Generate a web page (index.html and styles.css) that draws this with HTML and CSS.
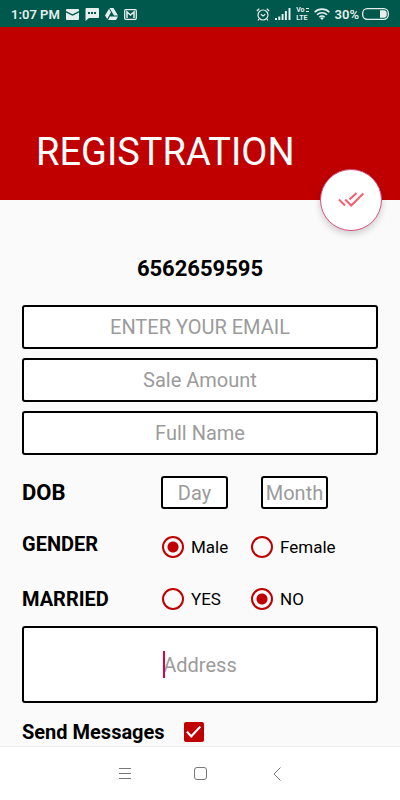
FILE: index.html
```html
<!DOCTYPE html>
<html lang="en">
<head>
<meta charset="utf-8">
<meta name="viewport" content="width=device-width, initial-scale=1">
<title>Registration</title>
<link rel="stylesheet" href="styles.css">
</head>
<body>
<div class="status">
  <div class="group left">
    <span class="time">1:07 PM</span>
    <svg width="13" height="11" viewBox="0 0 13 11"><path fill="currentColor" d="M1 0h11a1 1 0 0 1 1 1v1L6.500 5.200 0 2V1a1 1 0 0 1 1-1zM0 3.500l6.500 3.200L13 3.500V10a1 1 0 0 1-1 1H1a1 1 0 0 1-1-1z"/></svg>
    <svg width="14" height="13" viewBox="0 0 14 13"><path fill="currentColor" fill-rule="evenodd" d="M1 0h12a1 1 0 0 1 1 1v8a1 1 0 0 1-1 1H4l-3.500 3V1zM3 4v2h2V4zm3 0v2h2V4zm3 0v2h2V4z"/></svg>
    <svg width="13" height="12" viewBox="0 0 13 12"><path fill="currentColor" d="M4.500 0h4L13 7.500H9zM4 .8l2 3.400L2.200 11 0 7.500zM5 8.500h8L11 12H3z"/></svg>
    <svg width="13" height="11" viewBox="0 0 13 11"><rect x=".7" y=".7" width="11.600" height="9.600" rx="1" fill="none" stroke="currentColor" stroke-width="1.300"/><path d="M3 9V3l3.500 3L10 3v6" fill="none" stroke="currentColor" stroke-width="1.500"/></svg>
  </div>
  <div class="group">
    <svg width="14" height="13" viewBox="0 0 14 13" fill="none" stroke="currentColor" stroke-width="1.200"><circle cx="7" cy="7" r="5"/><path d="M4.800 6.300L7 8l2.300-1.700M.8 3L3.300.8M13.200 3L10.700.8M3 11l-1 1.500M11 11l1 1.500"/></svg>
    <svg width="16" height="12" viewBox="0 0 16 12"><path fill="currentColor" d="M0 10h2v2H0zM3.300 8.500h2V12h-2zM6.600 6h2v6h-2zM9.900 3h2v9h-2zM13.500 0h2v12h-2z"/></svg>
    <span class="volte"><span>Vo<i></i></span><span>LTE</span></span>
    <svg width="16" height="12" viewBox="0 0 16 12" fill="none" stroke="currentColor" stroke-width="1.600"><path d="M.6 4.200a10.500 10.500 0 0 1 14.800 0M3 6.800a7 7 0 0 1 10 0M5.400 9.200a3.700 3.700 0 0 1 5.200 0"/><path fill="currentColor" stroke="none" d="M6.300 10.200a2.400 2.400 0 0 1 3.400 0L8 12z"/></svg>
    <span class="battery">30%
      <svg width="27" height="12" viewBox="0 0 27 12"><rect x=".7" y=".7" width="25.600" height="10.600" rx="4.500" fill="none" stroke="currentColor" stroke-width="1.300"/><path fill="currentColor" d="M18 2.300h4a2.700 2.700 0 0 1 2.700 2.700v2a2.700 2.700 0 0 1-2.700 2.700h-4z"/></svg>
    </span>
  </div>
</div>
<header class="hero">
  <h1>REGISTRATION</h1>
  <button class="fab" type="button" aria-label="Submit">
    <svg width="26" height="16" viewBox="0 0 26 16" fill="none" stroke="#f55f70" stroke-width="2"><path d="M1 7.500l6 6M7.200 7.500l6 6L25.300 1.500M11.500 7.500L18.500 1"/></svg>
  </button>
</header>
<form class="form">
  <output class="phone">6562659595</output>
  <input class="box" type="email" placeholder="ENTER YOUR EMAIL" aria-label="Email">
  <input class="box" type="text" placeholder="Sale Amount" aria-label="Sale amount">
  <input class="box" type="text" placeholder="Full Name" aria-label="Full name">
  <div class="row dob">
    <span class="name large">DOB</span>
    <input class="box small" type="text" placeholder="Day" aria-label="Day">
    <input class="box small" type="text" placeholder="Month" aria-label="Month">
  </div>
  <div class="row gender" role="radiogroup" aria-label="Gender">
    <span class="name">GENDER</span>
    <label class="option"><input type="radio" name="gender" checked>Male</label>
    <label class="option"><input type="radio" name="gender">Female</label>
  </div>
  <div class="row married" role="radiogroup" aria-label="Married">
    <span class="name">MARRIED</span>
    <label class="option"><input type="radio" name="married">YES</label>
    <label class="option"><input type="radio" name="married" checked>NO</label>
  </div>
  <div class="address">
    <input class="box tall" type="text" placeholder="Address" aria-label="Address">
    <span class="caret"></span>
  </div>
  <div class="send">
    <label for="send">Send Messages</label>
    <input id="send" type="checkbox" checked>
  </div>
</form>
<nav class="keys">
  <button type="button" aria-label="Menu"><svg width="14" height="14" viewBox="0 0 14 14"><path d="M1 1.500h12M1 6.500h12M1 11.500h12"/></svg></button>
  <button type="button" aria-label="Home"><svg width="14" height="14" viewBox="0 0 14 14"><rect x=".5" y=".5" width="12" height="12" rx="2.500"/></svg></button>
  <button type="button" aria-label="Back"><svg width="14" height="14" viewBox="0 0 14 14"><path d="M10.500 .5L4 7l6.500 6.500"/></svg></button>
</nav>
</body>
</html>
```
FILE: styles.css
```css
* { box-sizing: border-box; }

body {
  margin: 0;
  min-height: 100vh;
  display: flex;
  flex-direction: column;
  background: #fafafa;
  color: #000;
  font-family: Roboto, "Liberation Sans", sans-serif;
}

.status {
  height: 27px;
  display: flex;
  align-items: center;
  justify-content: space-between;
  padding: 1px 11px 0 11px;
  background: #00574b;
  color: #e6efed;
  font-size: 13px;
  font-weight: 600;
}
.status svg { flex: none; }
.group {
  display: flex;
  align-items: center;
  gap: 5px;
}
.left { gap: 6px; }
.volte {
  display: flex;
  flex-direction: column;
  font-size: 7px;
  line-height: 8px;
  font-weight: 700;
}
.volte i {
  display: inline-block;
  width: 3px;
  height: 4px;
  margin-left: 1px;
  border: solid currentColor;
  border-width: 1px 0;
}
.battery {
  display: flex;
  align-items: center;
  gap: 3px;
}

.hero {
  position: relative;
  height: 173px;
  display: flex;
  align-items: flex-end;
  padding: 0 36px 25px;
  background: #c00000;
  color: #fff;
}
.hero h1 {
  margin: 0;
  font-size: 38px;
  line-height: 46px;
  font-weight: 400;
}
.fab {
  position: absolute;
  right: 18px;
  bottom: -31px;
  width: 62px;
  height: 62px;
  display: flex;
  align-items: center;
  justify-content: center;
  padding: 0;
  border: 1px solid #d9517c;
  border-radius: 50%;
  background: #fff;
  box-shadow: 0 3px 7px rgba(0, 0, 0, .18);
}

.form {
  flex: 1;
  display: flex;
  flex-direction: column;
  padding: 55px 22px 0;
}
.phone {
  margin-bottom: 22px;
  text-align: center;
  font-size: 22px;
  line-height: 28px;
  font-weight: 700;
}
.box {
  width: 100%;
  height: 44px;
  margin: 0 0 9px;
  padding: 0;
  border: 2px solid #000;
  border-radius: 3px;
  background: #fff;
  font: 400 20px/24px Roboto, "Liberation Sans", sans-serif;
  text-align: center;
  outline: none;
}
.box::placeholder { color: #9b9b9b; opacity: 1; }
.box.small { width: 67px; height: 33px; margin: 0; }
.box.tall { display: block; height: 77px; margin: 0; }

.row { display: flex; align-items: center; }
.name {
  width: 139px;
  font-size: 20px;
  line-height: 24px;
  font-weight: 700;
}
.large { font-size: 22px; }
.dob { margin-top: 12px; }
.dob .small + .small { margin-left: 33px; }
.gender { height: 30px; margin-top: 23px; }
.gender .name { align-self: flex-start; }
.married { height: 30px; margin-top: 22px; }
.option {
  width: 89px;
  display: flex;
  align-items: center;
  gap: 7px;
  padding-left: 1px;
  font-size: 17px;
  white-space: nowrap;
}
.option input {
  flex: none;
  appearance: none;
  width: 22px;
  height: 22px;
  margin: 0;
  border: 2px solid #c00000;
  border-radius: 50%;
}
.option input:checked { background: radial-gradient(circle, #c00000 5px, transparent 6px); }

.address { position: relative; margin-top: 12px; }
.caret {
  position: absolute;
  left: calc(50% - 37px);
  top: 25px;
  width: 2px;
  height: 27px;
  background: #d8004c;
}
.send {
  display: flex;
  align-items: center;
  gap: 19px;
  margin-top: 17px;
  font-size: 20px;
  line-height: 24px;
  font-weight: 700;
}
.send input {
  appearance: none;
  width: 20px;
  height: 20px;
  margin: 0;
  border-radius: 2px;
  background: #c00000;
  display: grid;
  place-items: center;
}
.send input:checked::before {
  content: "";
  width: 15px;
  height: 12px;
  background: #fff;
  clip-path: polygon(0 52%, 11% 41%, 34% 72%, 89% 0, 100% 11%, 34% 100%);
}

.keys {
  height: 54px;
  display: flex;
  align-items: center;
  justify-content: center;
  gap: 62px;
  padding-left: 2px;
  border-top: 1px solid #f0f0f0;
  background: #fff;
}
.keys button {
  display: flex;
  padding: 0;
  border: 0;
  background: none;
}
.keys svg { fill: none; stroke: #777; stroke-width: 1; }
```
